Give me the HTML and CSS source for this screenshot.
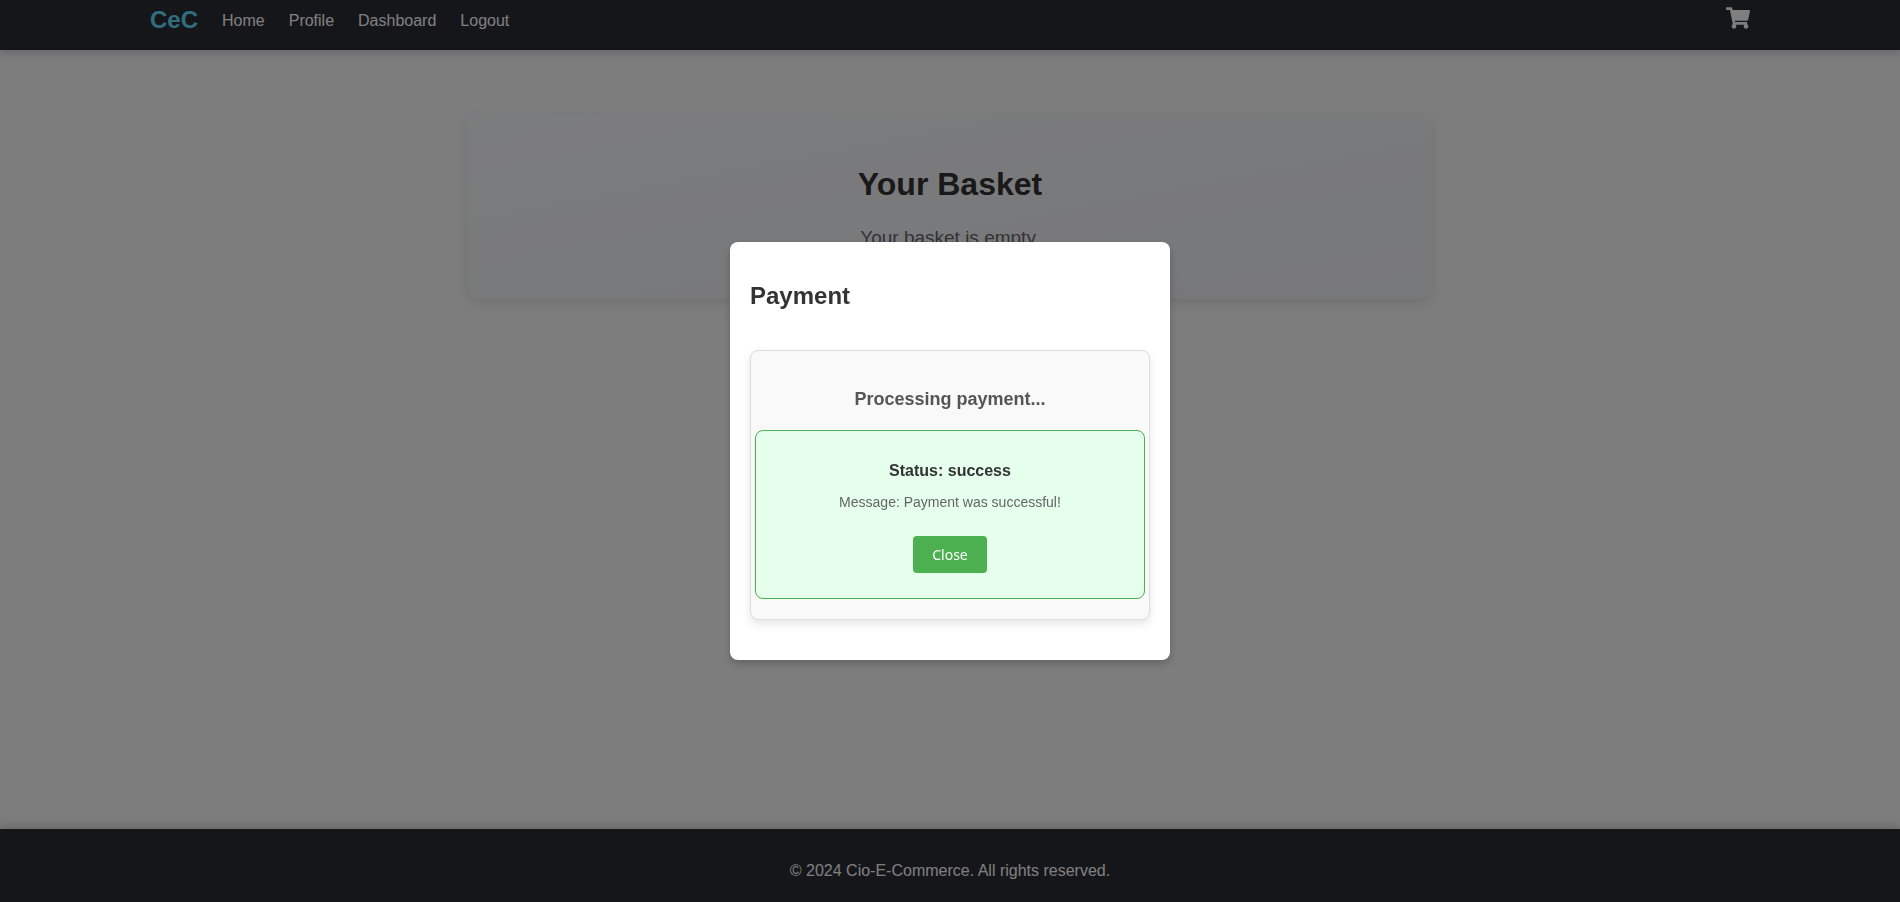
FILE: index.html
```html
<!DOCTYPE html>
<html lang="en">
<head>
<meta charset="utf-8">
<title>CeC</title>
<link rel="stylesheet" href="styles.css">
</head>
<body>
<header class="header">
  <nav class="nav">
    <a class="brand" href="#">CeC</a>
    <a class="nav-link" href="#">Home</a>
    <a class="nav-link" href="#">Profile</a>
    <a class="nav-link" href="#">Dashboard</a>
    <a class="nav-link" href="#">Logout</a>
  </nav>
  <a class="cart" href="#" aria-label="Basket">
    <svg viewBox="0 0 576 512" width="24" height="22" fill="currentColor" aria-hidden="true"><path d="M528.12 301.319l47.273-208C578.806 78.301 567.391 64 551.99 64H159.208l-9.166-44.81C147.758 8.021 137.93 0 126.529 0H24C10.745 0 0 10.745 0 24v16c0 13.255 10.745 24 24 24h69.883l70.248 343.435C147.325 417.1 136 435.222 136 456c0 30.928 25.072 56 56 56s56-25.072 56-56c0-15.674-6.447-29.835-16.824-40h209.647C430.447 426.165 424 440.326 424 456c0 30.928 25.072 56 56 56s56-25.072 56-56c0-22.172-12.888-41.332-31.579-50.405l5.517-24.276c3.413-15.018-8.002-29.319-23.403-29.319H218.117l-6.545-32h293.145c11.206 0 20.92-7.754 23.403-18.681z"/></svg>
  </a>
</header>
<main class="main">
  <section class="basket">
    <h1 class="basket-title">Your Basket</h1>
    <p class="basket-text">Your basket is empty.</p>
  </section>
</main>
<footer class="footer">
  <p class="footer-text">© 2024 Cio-E-Commerce. All rights reserved.</p>
</footer>
<div class="overlay">
  <div class="modal" role="dialog" aria-modal="true" aria-labelledby="payment-title">
    <h2 class="modal-title" id="payment-title">Payment</h2>
    <div class="payment">
      <h3 class="payment-title">Processing payment...</h3>
      <div class="status">
        <h4 class="status-title">Status: success</h4>
        <p class="status-text">Message: Payment was successful!</p>
        <button class="close" type="button">Close</button>
      </div>
    </div>
  </div>
</div>
</body>
</html>
```
FILE: styles.css
```css
* {
  box-sizing: border-box;
}

body {
  margin: 0;
  min-height: 100vh;
  display: flex;
  flex-direction: column;
  background: #fafafa;
  color: #333;
  font-family: "Liberation Sans", Arial, sans-serif;
}

h1, h2, h3, h4, p {
  margin: 0;
}

.header {
  display: flex;
  justify-content: space-between;
  align-items: flex-start;
  padding: 5px 150px 15px;
  background: #2a2d34;
  box-shadow: 0 4px 8px rgba(0, 0, 0, 0.15);
}

.nav {
  display: flex;
  align-items: center;
  gap: 24px;
}

.brand {
  color: #61dafb;
  font-size: 24px;
  line-height: 28px;
  font-weight: bold;
  text-decoration: none;
}

.nav-link {
  color: #fff;
  font-size: 16px;
  line-height: 28px;
  padding-top: 2px;
  text-decoration: none;
}

.cart {
  display: flex;
  padding-top: 2px;
  color: #fff;
}

.main {
  flex: 1;
  padding: 64px 16px;
}

.basket {
  max-width: 964px;
  margin: 0 auto;
  padding: 48px 32px;
  border-radius: 12px;
  background: linear-gradient(to bottom right, #f7f8fa, #eff0f7);
  box-shadow: 0 4px 12px rgba(0, 0, 0, 0.1);
  text-align: center;
}

.basket-title {
  font-size: 32px;
  line-height: 44px;
  margin-bottom: 18px;
}

.basket-text {
  color: #666;
  font-size: 19px;
  line-height: 27px;
}

.footer {
  padding: 32px 16px 22px;
  background: #2a2d34;
  box-shadow: 0 -4px 8px rgba(0, 0, 0, 0.15);
  color: #fff;
  text-align: center;
}

.footer-text {
  font-size: 16px;
  line-height: 19px;
}

.overlay {
  position: fixed;
  inset: 0;
  display: flex;
  justify-content: center;
  align-items: center;
  background: rgba(0, 0, 0, 0.5);
}

.modal {
  width: 440px;
  max-width: 100%;
  padding: 40px 20px;
  border-radius: 8px;
  background: #fff;
  box-shadow: 0 4px 8px rgba(0, 0, 0, 0.2);
}

.modal-title {
  margin-bottom: 40px;
  font-size: 24px;
  line-height: 28px;
}

.payment {
  padding: 35px 4px 20px;
  border: 1px solid #ddd;
  border-radius: 8px;
  background: #f9f9f9;
  box-shadow: 0 4px 8px rgba(0, 0, 0, 0.1);
  text-align: center;
}

.payment-title {
  margin-bottom: 18px;
  color: #555;
  font-size: 18px;
  line-height: 26px;
}

.status {
  padding: 30px 24px 25px;
  border: 1px solid #4caf50;
  border-radius: 8px;
  background: #e5ffec;
}

.status-title {
  margin-bottom: 11px;
  font-size: 16px;
  line-height: 20px;
}

.status-text {
  margin-bottom: 24px;
  color: #666;
  font-size: 14px;
  line-height: 20px;
}

.close {
  display: block;
  margin: 0 auto;
  padding: 8px 19px;
  border: 0;
  border-radius: 4px;
  background: #4caf50;
  color: #fff;
  font-family: "Noto Sans", sans-serif;
  font-size: 14px;
  line-height: 21px;
  cursor: pointer;
}
```
